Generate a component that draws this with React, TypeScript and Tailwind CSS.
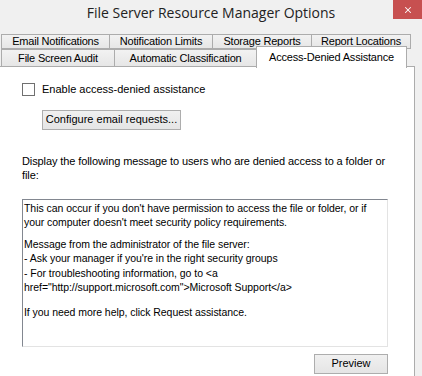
import { X } from "lucide-react";

const rowOne = [
  { label: "Email Notifications", w: "w-[109px]" },
  { label: "Notification Limits", w: "w-[104px]" },
  { label: "Storage Reports", w: "w-[100px]" },
  { label: "Report Locations", w: "w-[100px]" },
];

function Tab({ label, w, first }: { label: string; w: string; first?: boolean }) {
  return (
    <div
      className={`${w} flex h-full items-center justify-center border border-[#acacac] bg-gradient-to-b from-[#f2f2f2] to-[#e6e6e6] ${
        first ? "" : "-ml-px"
      }`}
    >
      {label}
    </div>
  );
}

export default function App() {
  return (
    <div className="relative h-[376px] w-[422px] overflow-hidden bg-[#f0f0f0] font-['Liberation_Sans',Arial,sans-serif] text-[11px] text-black">
      {/* title bar */}
      <div className="flex h-[25px] items-center justify-center font-['Open_Sans',sans-serif] text-[14px] text-[#222]">
        File Server Resource Manager Options
      </div>
      <div className="absolute right-0 top-0 flex h-[19px] w-[29px] items-center justify-center bg-[#c75050]">
        <X size={10} strokeWidth={2.5} color="white" />
      </div>

      {/* tab strip */}
      <div className="mt-[9px] flex h-[15px] pl-px tracking-[-0.2px]">
        {rowOne.map((t, i) => (
          <Tab key={t.label} label={t.label} w={t.w} first={i === 0} />
        ))}
      </div>
      <div className="flex h-[18px] pl-px tracking-[-0.2px]">
        <Tab label="File Screen Audit" w="w-[114px]" first />
        <Tab label="Automatic Classification" w="w-[143px]" />
        <div className="relative z-10 -mt-[3px] -ml-px flex h-[22px] w-[151px] items-start justify-center border border-b-0 border-[#acacac] bg-white pt-[2px]">
          Access-Denied Assistance
        </div>
      </div>

      {/* page */}
      <div className="-mt-px -ml-px flex h-[320px] w-[416px] flex-col border border-[#acacac] bg-white pl-[22px]">
        <label className="mt-[14px] flex items-center gap-[7px]">
          <span className="h-[13px] w-[13px] border border-[#707070] bg-white" />
          <span>Enable access-denied assistance</span>
        </label>

        <button className="mt-[12px] ml-[20px] h-[20px] w-[139px] border border-[#adadad] bg-gradient-to-b from-[#f0f0f0] to-[#e5e5e5] text-[11px]">
          Configure email requests...
        </button>

        <p className="mt-[24px] w-[365px] leading-[14px] tracking-[-0.1px]">
          Display the following message to users who are denied access to a folder or file:
        </p>

        <div className="mt-[17px] flex h-[148px] w-[366px] flex-col border border-t-[#828790] border-l-[#828790] border-r-[#e3e3e3] border-b-[#e3e3e3] px-[1px] pt-[1px] text-[10.5px] leading-[14.5px] tracking-[-0.05px]">
          <p>
            This can occur if you don't have permission to access the file or folder, or if your
            computer doesn't meet security policy requirements.
          </p>
          <p className="mt-[7px]">Message from the administrator of the file server:</p>
          <p>- Ask your manager if you're in the right security groups</p>
          <p>- For troubleshooting information, go to &lt;a</p>
          <p>href="http://support.microsoft.com"&gt;Microsoft Support&lt;/a&gt;</p>
          <p className="mt-[10px]">If you need more help, click Request assistance.</p>
        </div>

        <div className="mt-[7px] flex w-[366px] justify-end">
          <button className="h-[20px] w-[74px] border border-[#adadad] bg-gradient-to-b from-[#f0f0f0] to-[#e5e5e5] text-[11px]">
            Preview
          </button>
        </div>
      </div>
    </div>
  );
}
